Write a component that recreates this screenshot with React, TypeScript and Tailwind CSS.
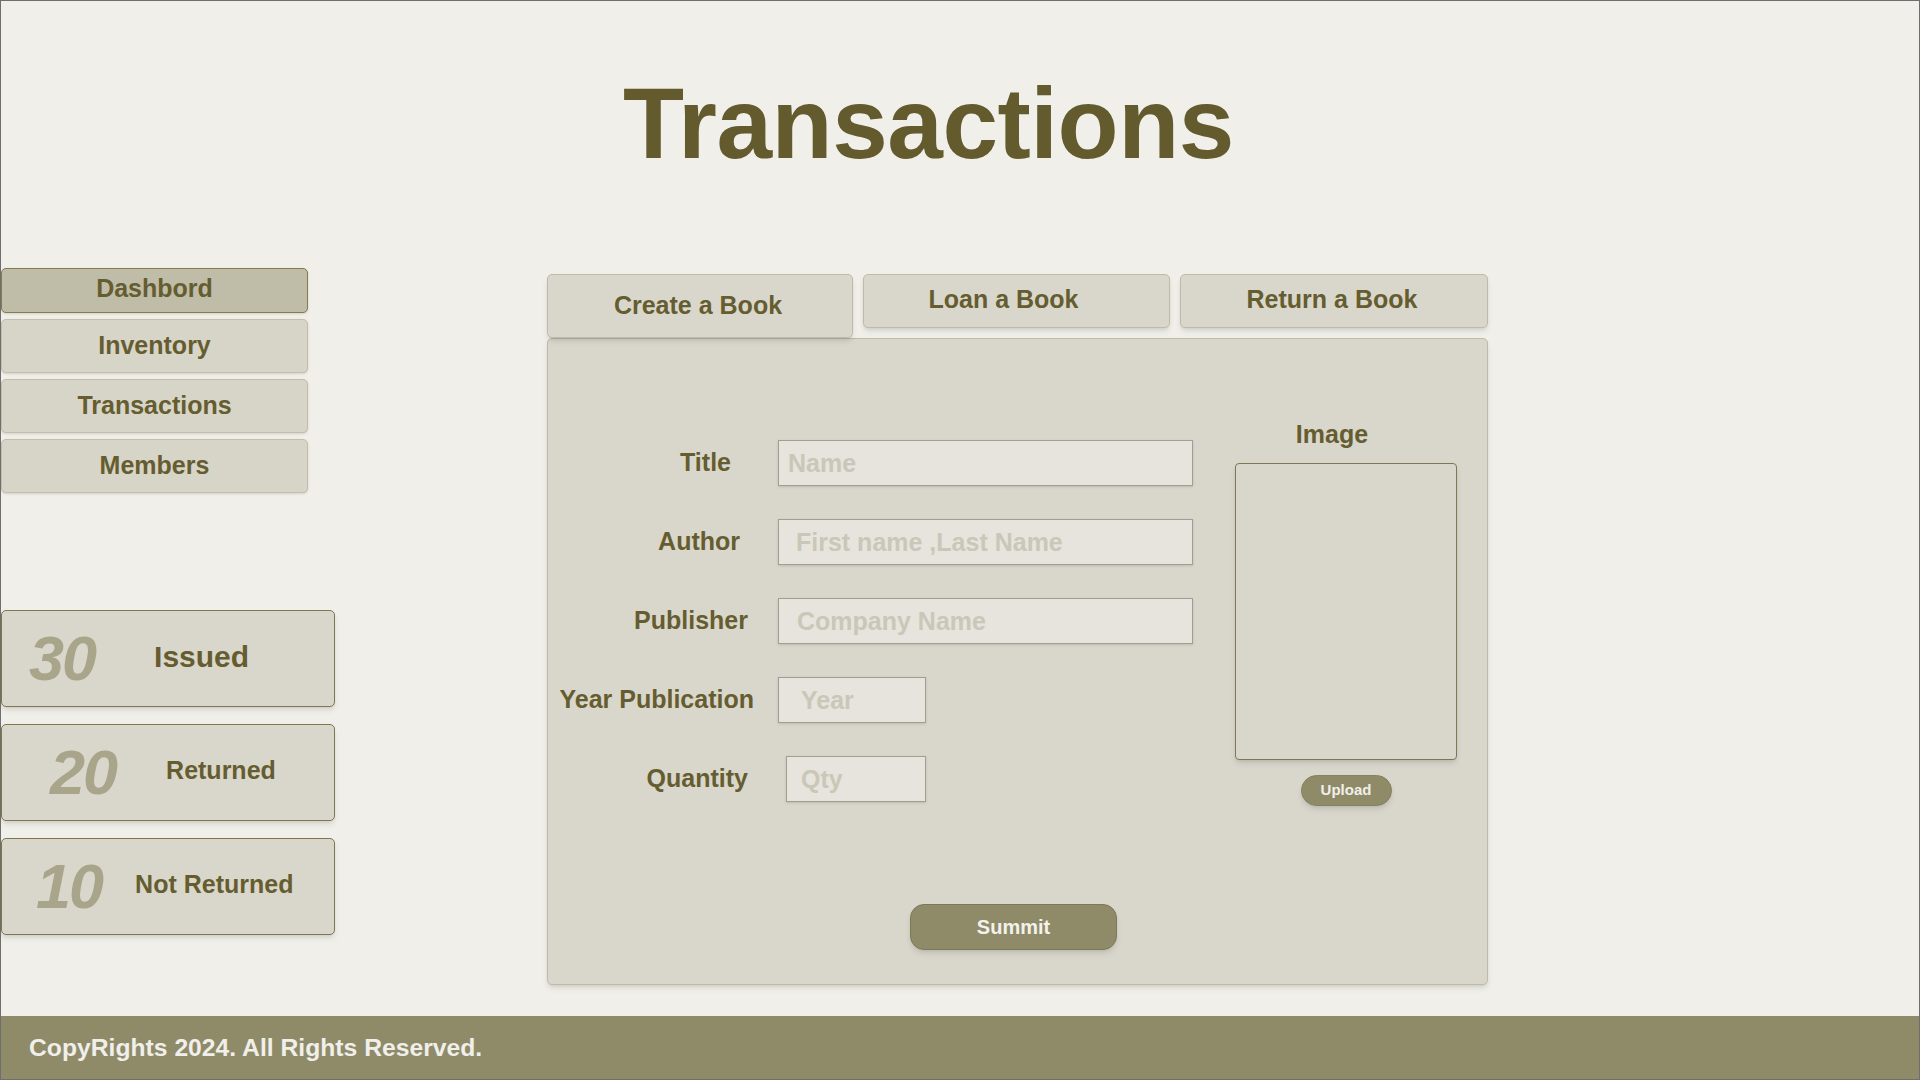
const font = { fontFamily: '"Liberation Sans", Arial, sans-serif' };

const navItems = [
  { label: "Dashbord", active: true },
  { label: "Inventory" },
  { label: "Transactions" },
  { label: "Members" },
];

const stats = [
  { num: "30", label: "Issued", pl: "pl-[27px]", gap: "gap-[59px]", size: "text-[30px]" },
  { num: "20", label: "Returned", pl: "pl-[48px]", gap: "gap-[50px]", size: "text-[25px]" },
  { num: "10", label: "Not Returned", pl: "pl-[34px]", gap: "gap-[33px]", size: "text-[25px]" },
];

const fields = [
  { label: "Title", pr: "pr-[47px]", ph: "Name", w: "w-[415px]", ml: "ml-0", pl: "pl-[9px]" },
  { label: "Author", pr: "pr-[38px]", ph: "First name ,Last Name", w: "w-[415px]", ml: "ml-0", pl: "pl-[17px]" },
  { label: "Publisher", pr: "pr-[30px]", ph: "Company Name", w: "w-[415px]", ml: "ml-0", pl: "pl-[18px]" },
  { label: "Year Publication", pr: "pr-[24px]", ph: "Year", w: "w-[148px]", ml: "ml-0", pl: "pl-[22px]" },
  { label: "Quantity", pr: "pr-[30px]", ph: "Qty", w: "w-[140px]", ml: "ml-[8px]", pl: "pl-[14px]" },
];

function Sidebar() {
  return (
    <aside className="w-[307px] flex-shrink-0">
      <nav className="flex flex-col gap-[6px]">
        {navItems.map(({ label, active }) => (
          <button
            key={label}
            className={
              active
                ? "h-[45px] rounded-[5px] border border-[#857b4f] bg-[#bfbca8] pb-[3px] text-[25px] font-bold text-[#655d30] shadow-sm"
                : "h-[54px] rounded-[5px] border border-[#c2bfae] bg-[#d7d4c8] text-[25px] font-bold text-[#655d30] shadow-sm"
            }
          >
            {label}
          </button>
        ))}
      </nav>

      <div className="mt-[117px] flex w-[334px] flex-col gap-[17px]">
        {stats.map((s) => (
          <div
            key={s.label}
            className={`flex h-[97px] items-center rounded-[5px] border border-[#7f7750] bg-[#d9d7cc] shadow-md ${s.pl} ${s.gap}`}
          >
            <span className="text-[63px] font-bold italic leading-none tracking-[-2px] text-[#a9a58b]">{s.num}</span>
            <span className={`${s.size} pb-[4px] font-bold text-[#655d30]`}>{s.label}</span>
          </div>
        ))}
      </div>
    </aside>
  );
}

function BookForm() {
  return (
    <div className="w-[941px]">
      <div className="flex items-start gap-[10px]">
        <button className="relative z-10 h-[64px] w-[306px] rounded-[5px] border border-[#bfbba9] bg-[#d9d7cc] pr-[4px] text-[25px] font-bold text-[#655d30] shadow-md">
          Create a Book
        </button>
        <button className="h-[54px] w-[307px] rounded-[5px] border border-[#bfbba9] bg-[#d9d7cc] pb-[2px] pr-[26px] text-[25px] font-bold text-[#655d30] shadow-md">
          Loan a Book
        </button>
        <button className="h-[54px] w-[308px] rounded-[5px] border border-[#bfbba9] bg-[#d9d7cc] pb-[2px] pr-[4px] text-[25px] font-bold text-[#655d30] shadow-md">
          Return a Book
        </button>
      </div>

      <div className="h-[647px] rounded-[5px] border border-[#bfbba9] bg-[#d9d7cc] shadow-md">
        <div className="flex items-start">
          <div className="flex w-[687px] flex-col gap-[33px] pt-[101px]">
            {fields.map((f) => (
              <div key={f.label} className="flex h-[46px] items-center">
                <label className={`w-[230px] text-right text-[25px] font-bold text-[#655d30] ${f.pr}`}>{f.label}</label>
                <input
                  placeholder={f.ph}
                  className={`h-[46px] border border-[#a19e94] bg-[#e6e4dd] text-[25px] font-bold text-[#655d30] shadow-sm outline-none placeholder:text-[#cac7b8] ${f.w} ${f.ml} ${f.pl}`}
                />
              </div>
            ))}
          </div>

          <div className="flex w-[222px] flex-col items-center pt-[77px]">
            <span className="pr-[28px] text-[25px] font-bold leading-[36px] text-[#655d30]">Image</span>
            <div className="mt-[11px] h-[297px] w-[222px] rounded-[4px] border border-[#7f7750] bg-[#d9d7cc] shadow-md" />
            <button className="mt-[15px] h-[31px] w-[91px] rounded-full border border-[#858160] bg-[#8f8b69] text-[15px] font-bold text-[#f0efea] shadow-md">
              Upload
            </button>
          </div>
        </div>

        <button className="ml-[362px] mt-[98px] h-[46px] w-[207px] rounded-[14px] border border-[#7d7957] bg-[#8f8b69] text-[20px] font-bold text-[#f3f2ec] shadow-md">
          Summit
        </button>
      </div>
    </div>
  );
}

export default function App() {
  return (
    <div style={font} className="flex h-[1080px] w-full flex-col overflow-hidden border border-[#6e6e6e] bg-[#f0efea]">
      <main className="flex-1">
        <div className="pl-[622px] pt-[72px]">
          <h1 className="text-[100px] font-bold leading-none tracking-[-0.5px] text-[#635a2d]">Transactions</h1>
        </div>

        <div className="mt-[95px] flex items-start">
          <Sidebar />
          <div className="ml-[239px] mt-[6px]">
            <BookForm />
          </div>
        </div>
      </main>

      <footer className="flex h-[63px] items-center bg-[#8f8b69] pl-[28px]">
        <p className="text-[24.7px] font-bold text-[#f0efea]">CopyRights 2024. All Rights Reserved.</p>
      </footer>
    </div>
  );
}
